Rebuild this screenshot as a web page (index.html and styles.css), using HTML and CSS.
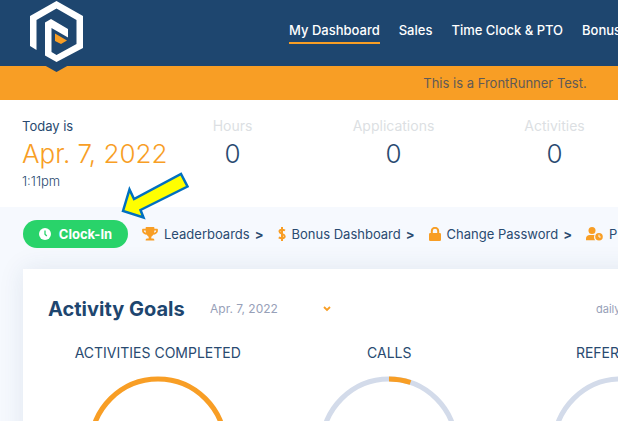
FILE: index.html
```html
<!DOCTYPE html>
<html lang="en">
<head>
<meta charset="utf-8">
<meta name="viewport" content="width=device-width, initial-scale=1">
<title>My Dashboard</title>
<link rel="stylesheet" href="styles.css">
</head>
<body>
<div class="page">
  <header class="topbar">
    <a class="logo" href="#" aria-label="Home">
      <svg width="54" height="72" viewBox="30 0 54 72">
        <path fill="#1e466f" d="M44 65h25l-12.500 7z"/>
        <path fill="#fff" d="M30 46V16L56.500 1 83 16v32L56.500 62 45 55.500v-33L51 19l17 10v8.500l-16.500-9.500v24l5 3 20-11V20l-20-11.500L36.500 20v30z"/>
        <path fill="#f89e25" d="M55 33.500l12 7-6 3.500-6-3z"/>
      </svg>
    </a>
    <nav class="nav">
      <a class="nav-link active" href="#">My Dashboard</a>
      <a class="nav-link" href="#">Sales</a>
      <a class="nav-link" href="#">Time Clock &amp; PTO</a>
      <a class="nav-link" href="#">Bonus</a>
    </nav>
  </header>
  <p class="notice">This is a FrontRunner Test.</p>

  <section class="summary">
    <div class="today">
      <div class="label">Today is</div>
      <div class="date">Apr. 7, 2022</div>
      <div class="time">1:11pm</div>
    </div>
    <div class="stat"><div class="label">Hours</div><div class="value">0</div></div>
    <div class="stat"><div class="label">Applications</div><div class="value">0</div></div>
    <div class="stat"><div class="label">Activities</div><div class="value">0</div></div>
  </section>

  <main class="main">
    <div class="actions">
      <button class="clock-in" type="button">
        <svg width="12" height="12" viewBox="0 0 12 12"><circle cx="6" cy="6" r="6" fill="#fff"/><path d="M6 2.500V6.200L7.800 8" fill="none" stroke="#29d36a" stroke-width="1.300"/></svg>
        Clock-In
      </button>
      <a class="action" href="#">
        <svg width="16" height="14" viewBox="0 0 576 512"><path fill="#f89e25" d="M552 64H448V24c0-13-11-24-24-24H152c-13 0-24 11-24 24v40H24C11 64 0 75 0 88v56c0 36 22 72 62 99 31 22 70 35 110 39 31 52 68 73 68 73v61h-48c-35 0-64 21-64 56v12c0 7 5 12 12 12h296c7 0 12-5 12-12v-12c0-35-29-56-64-56h-48v-61s37-21 68-73c40-4 79-17 110-39 40-27 62-63 62-99V88c0-13-11-24-24-24zM99 191c-25-17-35-36-35-47v-16h64c1 33 6 61 13 85-15-5-29-13-42-22zm413-47c0 16-17 35-35 47-13 9-27 17-42 22 7-24 12-52 13-85h64z"/></svg>
        Leaderboards <b>&gt;</b>
      </a>
      <a class="action" href="#">
        <svg width="8" height="14" viewBox="0 0 8 14"><path d="M4 0v14M7 3.500C5.500 2.600 1.500 2 1.500 4.400c0 2.600 5.200 2.200 5.200 4.900 0 2.500-4 2.300-5.900 1" fill="none" stroke="#f89e25" stroke-width="2"/></svg>
        Bonus Dashboard <b>&gt;</b>
      </a>
      <a class="action" href="#">
        <svg width="12" height="14" viewBox="0 0 12 14"><rect y="6" width="12" height="8" rx="1.300" fill="#f89e25"/><path d="M2.800 7V4a3.200 3.200 0 0 1 6.400 0v3" fill="none" stroke="#f89e25" stroke-width="2"/></svg>
        Change Password <b>&gt;</b>
      </a>
      <a class="action" href="#">
        <svg width="17" height="14" viewBox="0 0 17 14"><g fill="#f89e25"><circle cx="6" cy="3.500" r="3.500"/><path d="M0 13.300V11.500C0 9.300 1.600 8 3.700 8h4.800c-.8 2-.5 4 .8 5.300z"/><circle cx="13" cy="9.800" r="3.800"/></g><path d="M13 7.600V10h1.700" fill="none" stroke="#f6f9fe"/></svg>
        P
      </a>
      <svg class="pointer" width="70" height="50" viewBox="120 170 70 50"><path d="M123 211l6.500-21.500 4.500 9.500 47-25 6.500 12.500-47 23.500 3 7.500z" fill="#ff0" stroke="#0070c0" stroke-width="2.500"/></svg>
    </div>

    <section class="card">
      <div class="card-head">
        <h2 class="card-title">Activity Goals</h2>
        <button class="picker" type="button">Apr. 7, 2022
          <svg width="8" height="6" viewBox="0 0 8 6"><path d="M1 1l3 3 3-3" fill="none" stroke="#f89e25" stroke-width="1.800"/></svg>
        </button>
        <span class="period">daily</span>
      </div>
      <div class="goals">
        <div class="goal">
          <h3 class="goal-title">ACTIVITIES COMPLETED</h3>
          <svg width="140" height="140" viewBox="0 0 140 140"><circle class="ring full" cx="70" cy="70" r="67"/></svg>
        </div>
        <div class="goal">
          <h3 class="goal-title">CALLS</h3>
          <svg width="140" height="140" viewBox="0 0 140 140"><circle class="ring" cx="70" cy="70" r="67"/><path class="ring full" d="M70 3a67 67 0 0 1 21.500 3.500"/></svg>
        </div>
        <div class="goal">
          <h3 class="goal-title">REFERENCES</h3>
          <svg width="140" height="140" viewBox="0 0 140 140"><circle class="ring" cx="70" cy="70" r="67"/></svg>
        </div>
      </div>
    </section>
  </main>
</div>
</body>
</html>
```
FILE: styles.css
```css
* { box-sizing: border-box; }

body {
  margin: 0;
  overflow: hidden;
  background: #f6f9fe;
  color: #294a70;
  font-family: Inter, "Open Sans", sans-serif;
  font-size: 13px;
  line-height: 20px;
}

a { color: inherit; text-decoration: none; }
h2, h3, p { margin: 0; }
svg { display: block; flex: none; }
button { font: inherit; border: 0; cursor: pointer; }

.page { min-width: 1010px; }

.topbar {
  display: flex;
  align-items: flex-start;
  height: 66px;
  padding-left: 30px;
  background: #1e466f;
}
.logo { position: relative; z-index: 1; width: 54px; }
.nav {
  display: flex;
  gap: 19px;
  margin-left: 205px;
  padding-top: 20px;
  color: #fff;
  font-weight: 500;
}
.nav-link { height: 24px; white-space: nowrap; }
.nav-link.active { border-bottom: 2px solid #f89e25; }

.notice {
  padding: 7px 0;
  background: #f89e25;
  color: #5f5a57;
  text-align: center;
}

.summary {
  display: grid;
  grid-template-columns: 130px repeat(3, 161px);
  height: 107px;
  padding: 16px 22px 0;
  background: #fff;
}
.date {
  color: #f89e25;
  font-size: 26px;
  font-weight: 300;
  line-height: 36px;
  white-space: nowrap;
}
.time { font-weight: 300; line-height: 18px; }
.stat { text-align: center; }
.stat .label { color: #dcdfe3; font-size: 14px; }
.value { font-size: 26px; font-weight: 300; line-height: 36px; }

.main { padding: 13px 23px 0; }
.actions {
  position: relative;
  display: flex;
  align-items: center;
  gap: 14px;
}
.clock-in {
  display: flex;
  align-items: center;
  justify-content: center;
  gap: 8px;
  width: 105px;
  height: 28px;
  padding: 0;
  border-radius: 14px;
  background: #29d36a;
  color: #fff;
  font-weight: 700;
}
.action { display: flex; align-items: center; gap: 6px; white-space: nowrap; }
.action b { margin-left: -1px; }
.pointer { position: absolute; left: 97px; top: -50px; }

.card {
  margin-top: 21px;
  background: #fff;
  box-shadow: 0 0 24px rgba(30, 70, 111, 0.1);
}
.card-head {
  display: flex;
  align-items: center;
  height: 74px;
  padding: 6px 25px 0;
}
.card-title { width: 162px; color: #1e466f; font-size: 20px; font-weight: 700; }
.picker {
  display: flex;
  align-items: center;
  justify-content: space-between;
  width: 121px;
  padding: 0;
  background: none;
  color: #97a0b8;
  font-size: 12px;
}
.period { margin-left: 265px; color: #97a0b8; font-size: 11px; }

.goals { display: grid; grid-template-columns: repeat(4, 1fr); padding: 0 19px 30px; }
.goal { display: flex; flex-direction: column; align-items: center; gap: 13px; }
.goal-title { font-size: 14px; font-weight: 400; }
.ring { fill: none; stroke: #d3dbea; stroke-width: 5; }
.ring.full { stroke: #f89e25; }
```
